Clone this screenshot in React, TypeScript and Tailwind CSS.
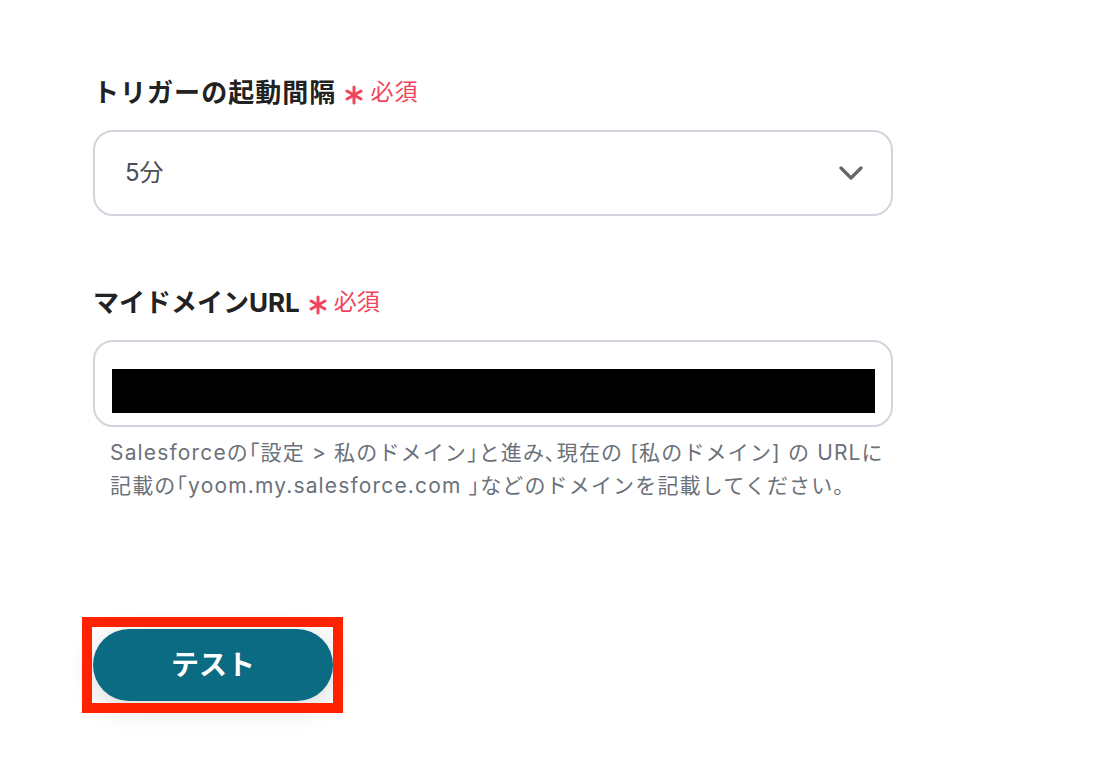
import React from "react";

const font = "font-['Inter','Noto_Sans_CJK_JP',sans-serif]";

function Required() {
  return (
    <span className="ml-[8px] inline-flex items-center text-[23px] font-normal text-[#f0455b]">
      <svg width="20" height="20" viewBox="0 0 20 20" className="mr-[6px] relative top-[3px]">
        <g stroke="#f0455b" strokeWidth="3" strokeLinecap="round">
          <path d="M10 2v16" />
          <path d="M3 6l14 8" />
          <path d="M3 14l14-8" />
        </g>
      </svg>
      必須
    </span>
  );
}

export default function App() {
  return (
    <div className={`min-h-screen bg-white pl-[93px] pt-[74px] ${font}`}>
      <div className="flex h-[36px] items-center text-[26px] font-bold text-[#222] tracking-[0.04em]">
        トリガーの起動間隔
        <Required />
      </div>

      <div className="mt-[20px] flex h-[86px] w-[800px] items-center justify-between rounded-[20px] border-2 border-[#d0d5dd] pl-[30px] pr-[28px]">
        <span className="text-[24px] text-[#49505a]">5分</span>
        <svg width="24" height="14" viewBox="0 0 24 14" fill="none">
          <path d="M2 2l10 10L22 2" stroke="#666" strokeWidth="3.2" strokeLinecap="round" strokeLinejoin="round" />
        </svg>
      </div>

      <div className="mt-[68px] flex h-[36px] items-center text-[26px] font-bold text-[#222]">
        マイドメインURL
        <Required />
      </div>

      <div className="mt-[20px] h-[87px] w-[800px] rounded-[20px] border-2 border-[#d0d5dd] pl-[17px] pr-[16px] pt-[27px]">
        <div className="h-[44px] w-full bg-black" />
      </div>

      <p className="mt-[9px] pl-[17px] text-[21px] leading-[33px] text-[#6b717a] tracking-[0.055em]">
        Salesforceの｢設定 &gt; 私のドメイン｣と進み､現在の [私のドメイン] の URLに
        <br />
        記載の｢yoom.my.salesforce.com ｣などのドメインを記載してください。
      </p>

      <div className="relative mt-[127px] w-fit">
        <button className="flex h-[72px] w-[240px] items-center justify-center rounded-full bg-[#0b6b82] text-[28px] font-bold text-white shadow-[0_6px_28px_rgba(0,0,0,0.16)]">
          テスト
        </button>
        <div className="pointer-events-none absolute left-[-11px] top-[-12px] h-[96px] w-[261px] border-[10px] border-[#ff2200]" />
      </div>
    </div>
  );
}
